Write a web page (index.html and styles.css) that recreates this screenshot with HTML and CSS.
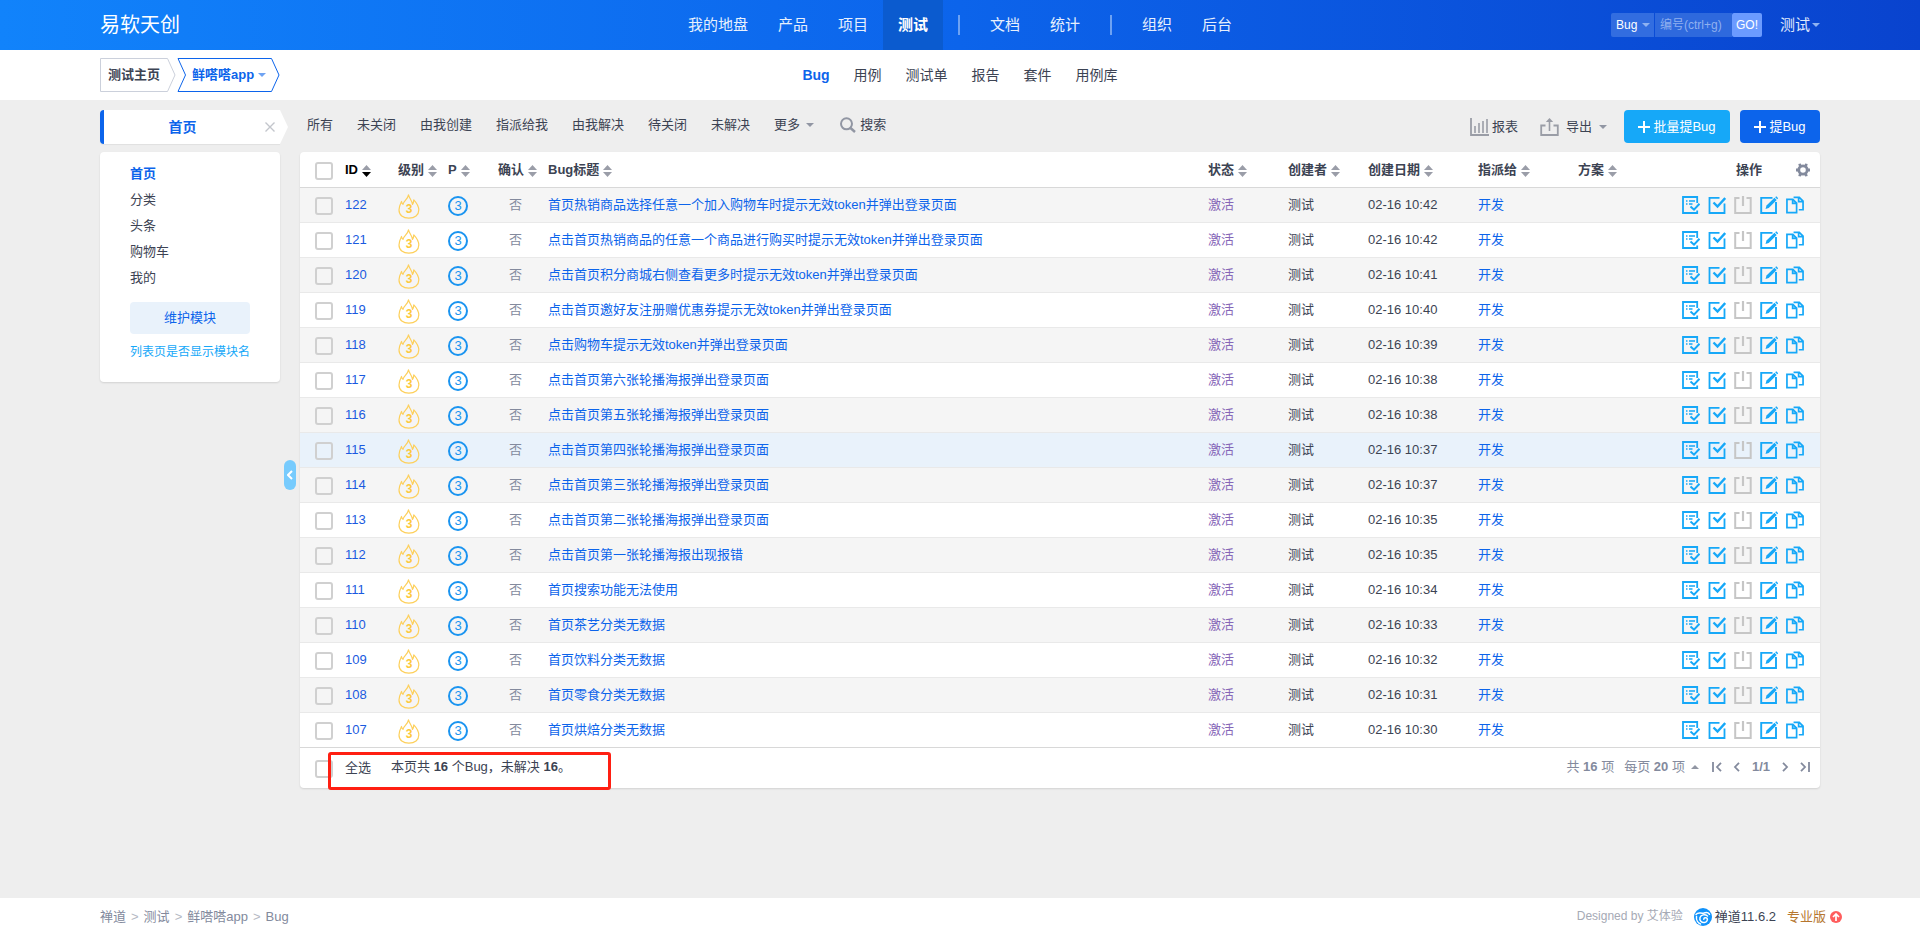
FILE: index.html
```html
<!DOCTYPE html>
<html lang="zh-CN">
<head>
<meta charset="utf-8">
<title>鲜嗒嗒app - Bug</title>
<link rel="stylesheet" href="styles.css">
</head>
<body>
<svg class="sprite" aria-hidden="true">
  <symbol id="i-flame" viewBox="0 0 22 25"><path d="M10.500.800C11 4 14 6 14.500 10.500c.8-1.200 1.200-2.500 1.300-4.700 3 3.200 5 6.700 5 10.200 0 5-4 8.200-9.900 8.200S1 21 1 16c0-3 1-5.500 2.500-8.500.3 1.500.8 2.300 1.500 2.900C5.300 7 9.800 5.500 10.500.8z" fill="none" stroke="#fdd05c" stroke-width="1.200" stroke-linejoin="round"/></symbol>
  <symbol id="i-confirm" viewBox="0 0 18 18"><path d="M15.200 7V1H1v16h14.200v-2.500" fill="none" stroke="#16a8f8" stroke-width="1.800"/><path d="M4 5h1.500M7 5h6M4 8h1.500M7 8h3.500" stroke="#16a8f8" stroke-width="1.400"/><path d="M8.500 10.500l3.500 3.200 5.500-6" fill="none" stroke="#16a8f8" stroke-width="2"/></symbol>
  <symbol id="i-resolve" viewBox="0 0 18 18"><path d="M11.500 1.900H1.500V17h15V7.500" fill="none" stroke="#16a8f8" stroke-width="1.800"/><path d="M5.500 6.500l4 4L17.200 2" fill="none" stroke="#16a8f8" stroke-width="2.400"/></symbol>
  <symbol id="i-close" viewBox="0 0 18 18"><path d="M5.500 1.900H1.200V17h15.500V1.900h-4.200" fill="none" stroke="#c6c6c6" stroke-width="2"/><path d="M9 0v10" stroke="#c6c6c6" stroke-width="2.200"/></symbol>
  <symbol id="i-edit" viewBox="0 0 18 18"><path d="M12.500 1.900H1.200V17h14.800V6" fill="none" stroke="#16a8f8" stroke-width="1.900"/><path d="M5.500 13l1-3.500L14.500 1.800l2.200 2.200-8 8z" fill="#16a8f8"/><path d="M15.200 1.300L16.300.2l2 2-1.100 1.100z" fill="#16a8f8"/></symbol>
  <symbol id="i-copy" viewBox="0 0 19 18"><path d="M7.200 3H1v14h10.200V7zM7 3.200v4h4" fill="none" stroke="#16a8f8" stroke-width="1.800"/><path d="M8 1h6l4 4v9h-4.500M13.300 1.200v4.300H18" fill="none" stroke="#16a8f8" stroke-width="1.800"/></symbol>
  <symbol id="i-sort" viewBox="0 0 9 12"><path d="M0 5L4.500 0 9 5z" fill="#9a9da8"/><path d="M0 7h9l-4.500 5z" fill="currentColor"/></symbol>
  <symbol id="i-caret" viewBox="0 0 8 4"><path d="M0 0h8L4 4z" fill="currentColor"/></symbol>
</svg>

<header class="topbar">
  <div class="side"><a class="company" href="#">易软天创</a></div>
  <nav class="mainnav">
    <a href="#">我的地盘</a><a href="#">产品</a><a href="#">项目</a><a href="#" class="active">测试</a><i class="sep"></i><a href="#">文档</a><a href="#">统计</a><i class="sep"></i><a href="#">组织</a><a href="#">后台</a>
  </nav>
  <div class="side right">
    <form class="gobox">
      <button type="button" class="kind">Bug <svg class="caret"><use href="#i-caret"/></svg></button>
      <input type="text" placeholder="编号(ctrl+g)" aria-label="编号">
      <button type="button" class="go">GO!</button>
    </form>
    <button type="button" class="user">测试<svg class="caret"><use href="#i-caret"/></svg></button>
  </div>
</header>

<div class="subbar">
  <div class="side crumbs">
    <a class="crumb home" href="#"><svg class="crumb-bg" viewBox="0 0 76 34"><path d="M.5.500h67l7.500 16.500-7.500 16.500H.5z" fill="#fff" stroke="#cbd0db"/></svg><span>测试主页</span></a>
    <a class="crumb product" href="#"><svg class="crumb-bg" viewBox="0 0 103 34"><path d="M1 .5h93.500l7.500 16.500-7.500 16.500H1L8.500 17z" fill="#fff" stroke="#0c64eb"/></svg><span>鲜嗒嗒app</span><svg class="caret"><use href="#i-caret"/></svg></a>
  </div>
  <nav class="subnav"><a href="#" class="active">Bug</a><a href="#">用例</a><a href="#">测试单</a><a href="#">报告</a><a href="#">套件</a><a href="#">用例库</a></nav>
  <div class="side"></div>
</div>

<main class="page">
  <aside class="sidebar">
    <div class="module-tab"><strong>首页</strong><button type="button" aria-label="关闭"><svg viewBox="0 0 10 10"><path d="M.5.500l9 9M9.500.500l-9 9" stroke="#c3c6cc" stroke-width="1.400"/></svg></button></div>
    <div class="panel">
      <ul class="tree">
        <li><a href="#" class="active">首页</a></li><li><a href="#">分类</a></li><li><a href="#">头条</a></li><li><a href="#">购物车</a></li><li><a href="#">我的</a></li>
      </ul>
      <button type="button" class="manage">维护模块</button>
      <a class="show-module" href="#">列表页是否显示模块名</a>
    </div>
    <button type="button" class="toggle" aria-label="收起"><svg viewBox="0 0 6 10"><path d="M5 1L1 5l4 4" fill="none" stroke="#fff" stroke-width="2"/></svg></button>
  </aside>

  <section class="content">
    <div class="toolbar">
      <nav class="filters">
        <a href="#">所有</a><a href="#">未关闭</a><a href="#">由我创建</a><a href="#">指派给我</a><a href="#">由我解决</a><a href="#">待关闭</a><a href="#">未解决</a><a href="#">更多<svg class="caret"><use href="#i-caret"/></svg></a>
        <a href="#" class="search"><svg viewBox="0 0 16 16"><circle cx="6.500" cy="6.800" r="5.500" fill="none" stroke="#9196a3" stroke-width="2"/><path d="M10.500 11l4.500 4" stroke="#9196a3" stroke-width="2.400"/></svg>搜索</a>
      </nav>
      <div class="actions">
        <a href="#" class="report"><svg viewBox="0 0 19 18"><path d="M1 0v17h18" fill="none" stroke="#9a9da6" stroke-width="1.800"/><path d="M5 8v7M9 5v10M13 3v12M17 1v14" stroke="#9a9da6" stroke-width="1.600"/></svg>报表</a>
        <a href="#" class="export"><svg viewBox="0 0 19 18"><path d="M5.500 7.500H1.200V17h16.600V7.500h-4.300" fill="none" stroke="#9a9da6" stroke-width="1.800"/><path d="M9.500 13V2" stroke="#9a9da6" stroke-width="1.600"/><path d="M5.800 4L9.500 0l3.700 4z" fill="#9a9da6"/></svg>导出<svg class="caret"><use href="#i-caret"/></svg></a>
        <button type="button" class="btn batch"><svg viewBox="0 0 12 12"><path d="M6 0v12M0 6h12" stroke="#fff" stroke-width="2"/></svg>批量提Bug</button>
        <button type="button" class="btn create"><svg viewBox="0 0 12 12"><path d="M6 0v12M0 6h12" stroke="#fff" stroke-width="2"/></svg>提Bug</button>
      </div>
    </div>

    <div class="listing">
      <table class="bugs">
        <colgroup><col class="c-id"><col class="c-s"><col class="c-s"><col class="c-s"><col><col class="c-m"><col class="c-m"><col class="c-date"><col class="c-l"><col class="c-l"><col class="c-ops"></colgroup>
        <thead>
          <tr>
            <th><label class="idcell"><input type="checkbox" aria-label="全选"><span class="sorted">ID<svg class="sort"><use href="#i-sort"/></svg></span></label></th>
            <th>级别<svg class="sort"><use href="#i-sort"/></svg></th>
            <th>P<svg class="sort"><use href="#i-sort"/></svg></th>
            <th>确认<svg class="sort"><use href="#i-sort"/></svg></th>
            <th>Bug标题<svg class="sort"><use href="#i-sort"/></svg></th>
            <th>状态<svg class="sort"><use href="#i-sort"/></svg></th>
            <th>创建者<svg class="sort"><use href="#i-sort"/></svg></th>
            <th>创建日期<svg class="sort"><use href="#i-sort"/></svg></th>
            <th>指派给<svg class="sort"><use href="#i-sort"/></svg></th>
            <th>方案<svg class="sort"><use href="#i-sort"/></svg></th>
            <th><div class="opshead">操作<button type="button" aria-label="设置"><svg viewBox="0 0 14 14"><circle cx="7" cy="7" r="4.200" fill="none" stroke="#838a9d" stroke-width="2.800"/><g fill="#838a9d"><path d="M0 5.500h2.500v3H0zM11.500 5.500H14v3h-2.500z"/><path d="M2.300 1l2.600-.5.8 2.500-2.500 1.300zM11.700 1L9.100.5 8.300 3l2.500 1.300zM2.300 13l2.600.5.8-2.500-2.500-1.300zM11.700 13l-2.600.5-.8-2.500 2.500-1.300z"/></g></svg></button></div></th>
          </tr>
        </thead>
        <tbody id="rows"></tbody>
      </table>
      <div class="tablefoot">
        <label class="idcell"><input type="checkbox"><span>全选</span></label>
        <p class="summary">本页共 <b>16</b> 个Bug，未解决 <b>16</b>。</p>
        <div class="pager">
          <span>共 <b>16</b> 项</span>
          <button type="button" class="perpage"><span>每页 <b>20</b> 项</span><svg class="caret"><use href="#i-caret"/></svg></button>
          <button type="button" aria-label="首页"><svg viewBox="0 0 10 10"><path d="M1 0v10M9 .8L5 5l4 4.200" fill="none" stroke="#838a9d" stroke-width="1.800"/></svg></button>
          <button type="button" aria-label="上一页"><svg viewBox="0 0 10 10"><path d="M7 .8L3 5l4 4.200" fill="none" stroke="#838a9d" stroke-width="1.800"/></svg></button>
          <b>1/1</b>
          <button type="button" aria-label="下一页"><svg viewBox="0 0 10 10"><path d="M3 .8L7 5 3 9.200" fill="none" stroke="#838a9d" stroke-width="1.800"/></svg></button>
          <button type="button" aria-label="末页"><svg viewBox="0 0 10 10"><path d="M9 0v10M1 .8L5 5 1 9.200" fill="none" stroke="#838a9d" stroke-width="1.800"/></svg></button>
        </div>
        <div class="highlight"></div>
      </div>
    </div>
  </section>
</main>

<footer class="footer">
  <nav class="trail"><a href="#">禅道</a><i>&gt;</i><a href="#">测试</a><i>&gt;</i><a href="#">鲜嗒嗒app</a><i>&gt;</i><span>Bug</span></nav>
  <div class="powered">
    <span class="designed">Designed by <span>艾体验</span></span>
    <a href="#" class="version"><svg viewBox="0 0 18 18"><circle cx="9" cy="9" r="9" fill="#1192fa"/><path d="M2 6.500C4.500 3.500 7 6 10 5c2-.8 4-.8 5.500 1.300M13.500 8C11 6 7 6.500 6 9.500c-.8 3 1.500 5.500 4.500 5 2.500-.5 3.500-2.800 2.500-4.200-1-1.200-3.300-.6-3.200 1M2.500 8.500C2 12 4 15 6.500 16" fill="none" stroke="#fff" stroke-width="1.500" stroke-linecap="round"/></svg>禅道11.6.2</a>
    <a href="#" class="pro">专业版<svg viewBox="0 0 12 12"><circle cx="6" cy="6" r="6" fill="#ff5d5d"/><path d="M6 10V4M3 6l3-3 3 3" fill="none" stroke="#fff" stroke-width="1.700"/></svg></a>
  </div>
</footer>
<script src="app.js"></script>
</body>
</html>
```
FILE: styles.css
```css
* { box-sizing: border-box; }
body {
  margin: 0;
  display: flex;
  flex-direction: column;
  min-height: 100vh;
  background: #eee;
  color: #3c4353;
  font: 13px/20px "Liberation Sans", "Noto Sans CJK SC", sans-serif;
}
a { color: inherit; text-decoration: none; }
button { padding: 0; border: 0; background: none; color: inherit; font: inherit; cursor: pointer; }
ul, p { margin: 0; padding: 0; list-style: none; }
i { font-style: normal; }
svg { display: block; flex: none; }
.sprite { display: none; }
.caret { width: 8px; height: 4px; color: #9196a3; }
.side { flex: 1; display: flex; align-items: center; }

.topbar {
  display: flex;
  height: 50px;
  padding: 0 100px;
  background: linear-gradient(90deg, #1183fb 0%, #0c64eb 50%, #0943ce 100%);
  color: #fff;
}
.company { font-size: 20px; }
.mainnav { display: flex; align-items: center; font-size: 15px; line-height: 50px; }
.mainnav a { padding: 0 15px; color: #e7f0fd; }
.mainnav .active { background: #0b5bcf; color: #fff; font-weight: 700; }
.mainnav .sep { width: 2px; height: 20px; margin: 0 15px; background: #6da2f3; }
.right { justify-content: flex-end; gap: 18px; }
.gobox { display: flex; height: 24px; font-size: 12px; }
.gobox .kind { display: flex; align-items: center; justify-content: space-between; width: 43px; padding: 0 4px 0 5px; background: #326de0; border-radius: 2px 0 0 2px; }
.gobox .caret, .user .caret { color: #8fb2f1; }
.gobox input { width: 77px; margin-left: 1px; padding: 0 5px; border: 0; background: #2e69dd; color: #fff; font: inherit; }
.gobox input::placeholder { color: #90b0ef; }
.gobox .go { width: 30px; background: #6b9bff; border-radius: 2px; }
.user { display: flex; align-items: center; gap: 2px; color: #e0eafc; font-size: 15px; }

.subbar { display: flex; height: 50px; padding: 0 100px; background: #fff; }
.crumbs { gap: 1px; font-weight: 700; }
.crumb { position: relative; display: flex; align-items: center; height: 34px; }
.crumb span, .crumb .caret { position: relative; }
.crumb-bg { position: absolute; inset: 0; width: 100%; height: 100%; }
.home { width: 76px; padding-left: 8px; }
.product { width: 103px; padding-left: 15px; gap: 4px; color: #0c64eb; }
.product .caret { color: #6fa3f3; }
.subnav { display: flex; align-items: center; gap: 24px; font-size: 14px; }
.subnav .active { color: #0c64eb; font-weight: 700; }

.page { flex: 1; display: flex; gap: 20px; padding: 10px 100px 0; }
.sidebar { position: relative; width: 180px; }
.module-tab {
  position: relative;
  display: flex;
  align-items: center;
  height: 34px;
  margin-bottom: 8px;
  padding-right: 5px;
  border-left: 4px solid #0c64eb;
  border-radius: 4px 0 0 4px;
  background: #fff;
  box-shadow: 0 1px 1px rgba(0, 0, 0, .06);
  color: #0c64eb;
  font-size: 14px;
}
.module-tab::after {
  content: "";
  position: absolute;
  left: 100%;
  top: 0;
  border: solid transparent;
  border-width: 17px 0 17px 8px;
  border-left-color: #fff;
}
.module-tab strong { flex: 1; padding-right: 4px; text-align: center; }
.module-tab svg { width: 10px; height: 10px; }
.panel {
  padding: 9px 30px 20px;
  border-radius: 4px;
  background: #fff;
  box-shadow: 0 1px 2px rgba(0, 0, 0, .12);
  min-height: 230px;
}
.tree { line-height: 26px; }
.tree .active { color: #0c64eb; font-weight: 700; }
.manage { width: 100%; height: 32px; margin: 11px 0 8px; border-radius: 4px; background: #e9f2fb; color: #0c64eb; }
.show-module { display: block; color: #16a8f8; font-size: 12px; white-space: nowrap; }
.toggle {
  position: absolute;
  left: 184px;
  top: 350px;
  display: flex;
  align-items: center;
  justify-content: center;
  width: 12px;
  height: 30px;
  border-radius: 6px;
  background: #77cbfd;
}
.toggle svg { width: 6px; height: 10px; }

.content { flex: 1; min-width: 0; }
.toolbar { display: flex; justify-content: space-between; height: 34px; margin-bottom: 8px; padding-left: 7px; }
.filters, .actions { display: flex; align-items: center; }
.filters { gap: 24px; height: 30px; }
.filters a, .actions a { display: flex; align-items: center; gap: 6px; }
.filters .search { gap: 4px; margin-left: 2px; }
.filters .search svg { width: 16px; height: 16px; }
.actions { gap: 10px; height: 33px; }
.actions .report { gap: 3px; margin-right: 12px; }
.actions .export { gap: 7px; margin-right: 7px; }
.actions a > svg:first-child { width: 19px; height: 18px; }
.btn { display: flex; align-items: center; justify-content: center; gap: 3px; height: 33px; border-radius: 4px; color: #fff; }
.btn svg { width: 12px; height: 12px; }
.btn.batch { width: 106px; background: #16a8f8; }
.btn.create { width: 80px; background: #0c64eb; }

.listing { border-radius: 4px; background: #fff; box-shadow: 0 1px 2px rgba(0, 0, 0, .12); }
.bugs { width: 100%; border-collapse: separate; border-spacing: 0; table-layout: fixed; }
.c-id { width: 90px; }
.c-s { width: 50px; }
.c-m { width: 80px; }
.c-date { width: 110px; }
.c-l { width: 100px; }
.c-ops { width: 150px; }
.bugs th, .bugs td { height: 35px; padding: 0 0 0 8px; text-align: left; white-space: nowrap; border-bottom: 1px solid #e9e9e9; }
.bugs th { height: 36px; border-color: #d8d8d8; font-weight: 700; }
.bugs tr:last-child td { border-color: #d8d8d8; }
.bugs tbody tr:nth-child(odd) { background: #f5f5f5; }
.bugs tbody tr.hover { background: #e9f2fb; }
.bugs td:first-child, .bugs th:first-child { padding-left: 15px; }
.bugs a { color: #0c64eb; }
.bugs .id { color: #1a5ae0; }
.bugs .no { color: #838a9d; padding-left: 19px; }
.bugs .active { color: #8666b8; }
.idcell { display: flex; align-items: center; gap: 12px; }
.idcell input {
  appearance: none;
  width: 18px;
  height: 18px;
  margin: 2px 0 0;
  border: 2px solid #d0d0d0;
  border-radius: 3px;
}
.sort { display: inline-block; width: 9px; height: 12px; margin-left: 4px; vertical-align: -3px; color: #9a9da8; }
.sorted, .sorted .sort { color: #000; }
.flame, .pri { margin-top: 2px; text-align: center; }
.flame { position: relative; width: 22px; height: 25px; color: #fdc93c; font-size: 12px; font-weight: 700; line-height: 30px; }
.flame svg { position: absolute; inset: 0; width: 22px; height: 25px; }
.pri { width: 20px; height: 20px; border: 2px solid #1a94f0; border-radius: 50%; color: #1a94f0; line-height: 16px; }
.ops { display: flex; gap: 8px; padding-left: 4px; }
.ops svg { width: 18px; height: 18px; }
.opshead { display: flex; align-items: center; justify-content: flex-end; gap: 34px; padding-right: 10px; }
.opshead svg { width: 14px; height: 14px; }

.tablefoot { position: relative; display: flex; height: 40px; padding: 0 10px 0 15px; }
.summary { margin-left: 20px; line-height: 38px; }
.pager { display: flex; align-items: center; gap: 10px; height: 38px; margin-left: auto; color: #838a9d; }
.pager svg { width: 10px; height: 10px; }
.pager .perpage { display: flex; align-items: center; gap: 6px; margin-right: 3px; }
.pager .caret { width: 8px; height: 4px; transform: rotate(180deg); }
.highlight { position: absolute; left: 28px; top: 4px; width: 283px; height: 38px; border: 3px solid #ff1f12; border-radius: 3px; pointer-events: none; }

.footer { display: flex; justify-content: space-between; height: 39px; padding: 0 78px 0 100px; background: #fff; line-height: 37px; color: #838a9d; }
.trail i { padding: 0 5px; color: #b5b9c4; }
.powered { display: flex; gap: 11px; }
.designed { color: #a6aab5; font-size: 12px; }
.version, .pro { display: flex; align-items: center; gap: 3px; height: 37px; color: #3c4353; }
.version svg { width: 18px; height: 18px; }
.pro { gap: 4px; color: #b6762f; }
.pro svg { width: 12px; height: 12px; }
```
FILE: app.js
```js
const bugs = [
  [122, "首页热销商品选择任意一个加入购物车时提示无效token并弹出登录页面", "10:42"],
  [121, "点击首页热销商品的任意一个商品进行购买时提示无效token并弹出登录页面", "10:42"],
  [120, "点击首页积分商城右侧查看更多时提示无效token并弹出登录页面", "10:41"],
  [119, "点击首页邀好友注册赠优惠券提示无效token并弹出登录页面", "10:40"],
  [118, "点击购物车提示无效token并弹出登录页面", "10:39"],
  [117, "点击首页第六张轮播海报弹出登录页面", "10:38"],
  [116, "点击首页第五张轮播海报弹出登录页面", "10:38"],
  [115, "点击首页第四张轮播海报弹出登录页面", "10:37"],
  [114, "点击首页第三张轮播海报弹出登录页面", "10:37"],
  [113, "点击首页第二张轮播海报弹出登录页面", "10:35"],
  [112, "点击首页第一张轮播海报出现报错", "10:35"],
  [111, "首页搜索功能无法使用", "10:34"],
  [110, "首页茶艺分类无数据", "10:33"],
  [109, "首页饮料分类无数据", "10:32"],
  [108, "首页零食分类无数据", "10:31"],
  [107, "首页烘焙分类无数据", "10:30"]
];
const ops = [["confirm", "确认"], ["resolve", "解决"], ["close", "关闭"], ["edit", "编辑"], ["copy", "复制"]]
  .map(([icon, label]) => `<button type="button" aria-label="${label}"><svg><use href="#i-${icon}"/></svg></button>`).join("");

document.getElementById("rows").innerHTML = bugs.map(([id, title, time]) => `
  <tr${id === 115 ? ' class="hover"' : ""}>
    <td><div class="idcell"><input type="checkbox" aria-label="${id}"><a href="#" class="id">${id}</a></div></td>
    <td><div class="flame"><svg><use href="#i-flame"/></svg>3</div></td>
    <td><div class="pri">3</div></td>
    <td class="no">否</td>
    <td><a href="#">${title}</a></td>
    <td class="active">激活</td>
    <td>测试</td>
    <td>02-16 ${time}</td>
    <td><a href="#">开发</a></td>
    <td></td>
    <td><div class="ops">${ops}</div></td>
  </tr>`).join("");
```
